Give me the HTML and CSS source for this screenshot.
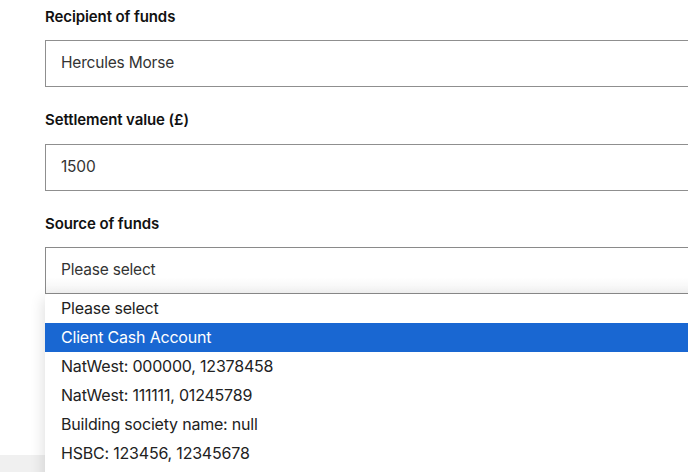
FILE: index.html
```html
<!DOCTYPE html>
<html lang="en">
<head>
<meta charset="utf-8">
<title>Settlement</title>
<link rel="stylesheet" href="styles.css">
</head>
<body>
<div class="page">
  <form class="form">
    <div class="field">
      <div class="label">Recipient of funds</div>
      <div class="input">Hercules Morse</div>
    </div>
    <div class="field">
      <div class="label">Settlement value (£)</div>
      <div class="input">1500</div>
    </div>
    <div class="field select-field">
      <div class="label">Source of funds</div>
      <div class="input select">Please select</div>
      <ul class="dropdown">
        <li class="option">Please select</li>
        <li class="option selected">Client Cash Account</li>
        <li class="option">NatWest: 000000, 12378458</li>
        <li class="option">NatWest: 111111, 01245789</li>
        <li class="option">Building society name: null</li>
        <li class="option">HSBC: 123456, 12345678</li>
      </ul>
    </div>
    <div class="behind"></div>
  </form>
  <div class="footer"></div>
</div>
</body>
</html>
```
FILE: styles.css
```css
html, body {
  margin: 0;
  padding: 0;
  background: #fff;
  overflow: hidden;
  height: 472px;
}
.page {
  position: relative;
  width: 688px;
  height: 472px;
  overflow: hidden;
  font-family: Inter, "Liberation Sans", sans-serif;
}
.form {
  display: flex;
  flex-direction: column;
  padding: 5.5px 0 0 45px;
  gap: 23.5px;
}
.field {
  display: flex;
  flex-direction: column;
  gap: 13.5px;
}
.field + .field {
  margin-top: -1.5px;
}
.select-field {
  position: relative;
  z-index: 2;
}
.label {
  font-size: 15px;
  font-weight: 600;
  color: #111;
  line-height: 21px;
  letter-spacing: -0.1px;
}
.input {
  box-sizing: border-box;
  width: 760px;
  height: 47px;
  border: 1px solid #8f8f8f;
  background: #fff;
  padding: 0 15px 2px;
  font-size: 15.5px;
  color: #333;
  display: flex;
  align-items: center;
  letter-spacing: -0.2px;
}
.select {
  background: linear-gradient(#fff 0%, #fff 65%, #f3f3f3 100%);
  border-color: #8a8a8a;
}
.dropdown {
  position: absolute;
  left: 0;
  top: 81.5px;
  width: 760px;
  height: 200px;
  margin: 0;
  padding: 0;
  list-style: none;
  background: #fff;
  border-top-left-radius: 4px;
  box-shadow: -2px 4px 14px rgba(0, 0, 0, 0.12);
}
.option {
  height: 29px;
  line-height: 28px;
  padding-left: 16px;
  font-size: 16px;
  color: #222;
  letter-spacing: -0.2px;
}
.option.selected {
  background: #1967d2;
  color: #fff;
}
.behind {
  margin-top: 36px;
  height: 70px;
  width: 200px;
  border: 1px solid #888;
}
.footer {
  position: absolute;
  left: 0;
  right: 0;
  bottom: 0;
  height: 17px;
  background: #f0f0f0;
}
```
